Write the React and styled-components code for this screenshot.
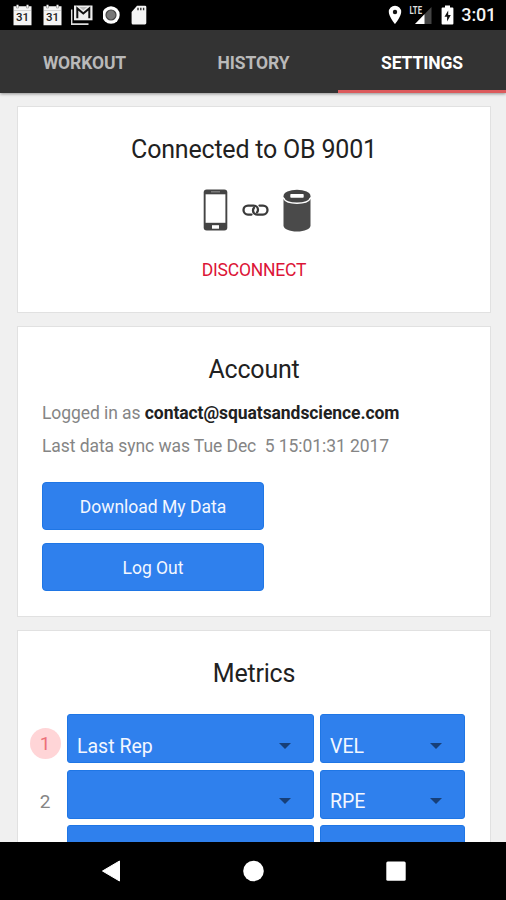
import React from 'react';
import styled, { createGlobalStyle } from 'styled-components';

const GlobalStyle = createGlobalStyle`
  * {
    box-sizing: border-box;
  }

  body {
    margin: 0;
    background: #f0f0f0;
    font-family: Roboto, 'Liberation Sans', sans-serif;
  }
`;

const Screen = styled.div`
  display: flex;
  flex-direction: column;
  width: 506px;
  height: 900px;
  overflow: hidden;
  background: #f0f0f0;
`;

const StatusBar = styled.header`
  display: flex;
  justify-content: space-between;
  flex: none;
  height: 30px;
  padding: 0 10px 0 12px;
  background: #000;
`;

const StatusGroup = styled.div`
  display: flex;
  align-items: center;
  gap: ${props => props.$gap}px;

  svg {
    display: block;
  }
`;

const Clock = styled.span`
  color: #f4f4f4;
  font-size: 18px;
  font-weight: 500;
  line-height: 32px;
  letter-spacing: -0.2px;
`;

const Tabs = styled.nav`
  display: grid;
  grid-template-columns: 169px 169px 168px;
  flex: none;
  height: 63px;
  background: #333;
  box-shadow: 0 1px 3px rgba(0, 0, 0, 0.4);
`;

const Tab = styled.a`
  height: 63px;
  padding-top: 3px;
  border-bottom: 3px solid ${props => (props.$active ? '#dc5a5c' : '#333')};
  color: ${props => (props.$active ? '#fff' : '#b9b9b9')};
  font-size: 17.5px;
  font-weight: 700;
  line-height: 60px;
  letter-spacing: -0.1px;
  text-align: center;
`;

const Content = styled.main`
  display: flex;
  flex-direction: column;
  flex: 1;
  gap: 13px;
  min-height: 0;
  padding: 13px 15px 0 17px;
  overflow: hidden;
`;

const Card = styled.section`
  flex: none;
  height: ${props => props.$height}px;
  padding: 28px 24px 0;
  border: 1px solid #e1e1e1;
  background: #fff;
`;

const Title = styled.h2`
  margin: 0;
  color: #212121;
  font-size: 25px;
  font-weight: 400;
  line-height: 30px;
  letter-spacing: -0.2px;
  text-align: center;
`;

const Devices = styled.div`
  display: flex;
  justify-content: center;
  align-items: center;
  gap: 14px;
  height: 44px;
  margin: 23px 0 27px;
  padding-left: 6px;

  svg {
    display: block;
  }
`;

const Disconnect = styled.a`
  display: block;
  color: #dc1437;
  font-size: 17.5px;
  line-height: 22px;
  letter-spacing: -0.2px;
  text-align: center;
`;

const Details = styled.div`
  margin: 12px 0 19px;
`;

const Line = styled.p`
  margin: 0;
  color: #858585;
  font-size: 17.5px;
  line-height: 33px;
  letter-spacing: -0.07px;
  white-space: pre;

  strong {
    color: #212121;
    font-weight: 700;
  }
`;

const Button = styled.button`
  display: block;
  width: 222px;
  height: 48px;
  margin: 0 0 13px;
  padding: 2px 0 0;
  border: 1px solid #1f76e5;
  border-radius: 4px;
  background: #2f80ed;
  color: #f3f7ff;
  font: 400 17.5px Roboto, sans-serif;
`;

const Metrics = styled.div`
  display: flex;
  flex-direction: column;
  gap: 6.5px;
  margin: 25px 0 0 -12.5px;
`;

const MetricRow = styled.div`
  display: grid;
  grid-template-columns: 31px 246.5px 145px;
  column-gap: 6.5px;
  height: 49px;
`;

const Rank = styled.span`
  width: 31px;
  height: 31px;
  margin-top: ${props => (props.$active ? 14 : 16)}px;
  border-radius: 50%;
  background: ${props => (props.$active ? '#ffd5d7' : 'transparent')};
  color: ${props => (props.$active ? '#ec7078' : '#858585')};
  font-size: 19px;
  line-height: 32px;
  text-align: center;
`;

const Select = styled.div`
  display: flex;
  justify-content: space-between;
  align-items: center;
  padding: 16px 22px 0 9px;
  border: 1px solid #1f76e5;
  border-radius: 3px;
  background: #2f80ed;
  color: #f3f7ff;
  font-size: 19.5px;
  line-height: 30px;
`;

const Caret = styled.span`
  margin: 0 0 2px auto;
  border: 6px solid transparent;
  border-top-color: #173f78;
  border-bottom: 0;
`;

const NavBar = styled.footer`
  display: flex;
  justify-content: space-between;
  align-items: center;
  flex: none;
  height: 58px;
  padding: 0 100px 0 101px;
  background: #000;
`;

const CalendarIcon = () => (
  <svg width="21" height="22" viewBox="0 0 21 22">
    <path d="M1.5 2.2h3V.8h2v1.4h8V.8h2v1.4h3v19h-18z" fill="#f5f5f5" />
    <path d="M2 6.5h17" stroke="#ccc" strokeWidth=".8" />
    <path d="M4.5 2v2h2V2m8 0v2h2V2" stroke="#999" fill="none" strokeWidth=".7" />
    <text x="10.5" y="17" textAnchor="middle" fontSize="11.5" fontWeight="500" fill="#222">31</text>
  </svg>
);

const MailIcon = () => (
  <svg width="23" height="22" viewBox="0 0 23 22">
    <path d="M.5 5.5v14.7h17" fill="none" stroke="#ddd" strokeWidth="1.8" />
    <path d="M3 1.5h18.5v14.8H3z" fill="#eee" />
    <path d="M6.3 14.3V4.5l6 5 6-5v9.8" fill="none" stroke="#111" strokeWidth="2" />
    <path d="M8.3 3h8l-4 3.2z" fill="#bbb" />
  </svg>
);

const RecordIcon = () => (
  <svg width="18" height="20" viewBox="0 0 18 20">
    <circle cx="8" cy="10" r="8.7" fill="#fff" />
    <circle cx="8" cy="10" r="5" fill="#777" stroke="#444" strokeWidth="1.2" />
  </svg>
);

const SdCardIcon = () => (
  <svg width="18" height="20" viewBox="-2 0 18 20">
    <path d="M6 .8h8q1.3 0 1.3 1.3v16q0 1.4-1.4 1.4H2Q.6 19.5.6 18V7z" fill="#f5f5f5" />
    <path d="M7 2.8v2.5m2.8-2.5v2.5m2.800-2.500v2.500" stroke="#333" strokeWidth="1.4" />
  </svg>
);

const PinIcon = () => (
  <svg width="14" height="20" viewBox="0 0 14 20">
    <path d="M7 .8A6.2 6.2 0 0 0 .8 7C.8 11.5 7 19 7 19s6.2-7.5 6.2-12A6.2 6.2 0 0 0 7 .8z" fill="#fff" />
    <circle cx="7" cy="7" r="2.2" fill="#111" />
  </svg>
);

const SignalIcon = () => (
  <svg width="24" height="22" viewBox="0 0 24 22">
    <path d="M22.5 3v17H6z" fill="#444" />
    <path d="M15.5 10.2V20H6z" fill="#fff" />
    <text x=".5" y="10" fontSize="10.5" fontWeight="700" textLength="12.5" lengthAdjust="spacingAndGlyphs" fill="#ddd">LTE</text>
  </svg>
);

const BatteryIcon = () => (
  <svg width="13" height="20" viewBox="0 0 13 20">
    <path d="M4 .5h5v2h2.5q.9 0 .9.9v15.100q0 .9-.9.9h-10q-.9 0-.9-.9V3.400q0-.9.9-.9H4z" fill="#fff" />
    <path d="M7.2 5.500 3.500 11.800h2.600v4.700l3.700-6.400H7.200z" fill="#111" />
  </svg>
);

const PhoneIcon = () => (
  <svg width="25" height="42" viewBox="0 0 25 42">
    <rect x=".7" y=".5" width="23.6" height="41" rx="3" fill="#444" />
    <path d="M2.6 5.3h19.8v28.5H2.6z" fill="#fff" />
    <path d="M8 2.8h9" stroke="#888" strokeWidth="1.2" />
    <rect x="9" y="36.2" width="7" height="3.5" fill="#fff" />
  </svg>
);

const LinkIcon = () => (
  <svg width="27" height="14" viewBox="0 0 27 14" fill="none" stroke="#3a3a3a" strokeWidth="2.3" strokeLinecap="round">
    <path d="M9.5 11.6H6a4.5 4.5 0 0 1 0-9h5.5c2.6 0 4.5 1.7 4.5 4.2 0 1-.4 1.9-1 2.6" />
    <path d="M17.5 2.6H21a4.5 4.5 0 0 1 0 9h-5.5c-2.6 0-4.5-1.7-4.5-4.2 0-1 .4-1.9 1-2.6" />
  </svg>
);

const SensorIcon = () => (
  <svg width="28" height="43" viewBox="0 0 28 43">
    <path d="M.5 10v26.5c0 3.500 6 6 13.500 6s13.500-2.500 13.500-6V10z" fill="#4a4a4a" />
    <ellipse cx="14" cy="7.2" rx="13.5" ry="6.5" fill="#444" />
    <path d="M.3 8.7c1.5 4 7 5.6 13.700 5.6s12.200-1.600 13.700-5.600" fill="none" stroke="#fff" strokeWidth="1.5" />
    <rect x="7.3" y="5" width="13.4" height="3.8" rx=".8" fill="#fff" />
  </svg>
);

const metrics = [
  { id: 'first', rank: 1, name: 'Last Rep', unit: 'VEL', active: true },
  { id: 'second', rank: 2, name: '', unit: 'RPE' },
  { id: 'third', name: '', unit: '' },
];

function Metric({ rank, name, unit, active }) {
  return (
    <MetricRow>
      <Rank $active={active}>{rank}</Rank>
      <Select>{name}<Caret /></Select>
      <Select>{unit}<Caret /></Select>
    </MetricRow>
  );
}

function App() {
  return (
    <Screen>
      <GlobalStyle />
      <StatusBar>
        <StatusGroup $gap={8.5}>
          <CalendarIcon />
          <CalendarIcon />
          <MailIcon />
          <RecordIcon />
          <SdCardIcon />
        </StatusGroup>
        <StatusGroup $gap={7.5}>
          <PinIcon />
          <SignalIcon />
          <BatteryIcon />
          <Clock>3:01</Clock>
        </StatusGroup>
      </StatusBar>
      <Tabs>
        <Tab>WORKOUT</Tab>
        <Tab>HISTORY</Tab>
        <Tab $active>SETTINGS</Tab>
      </Tabs>
      <Content>
        <Card $height={207}>
          <Title>Connected to OB 9001</Title>
          <Devices>
            <PhoneIcon />
            <LinkIcon />
            <SensorIcon />
          </Devices>
          <Disconnect>DISCONNECT</Disconnect>
        </Card>
        <Card $height={291}>
          <Title>Account</Title>
          <Details>
            <Line>Logged in as <strong>contact@squatsandscience.com</strong></Line>
            <Line>Last data sync was Tue Dec  5 15:01:31 2017</Line>
          </Details>
          <Button>Download My Data</Button>
          <Button>Log Out</Button>
        </Card>
        <Card $height={300}>
          <Title>Metrics</Title>
          <Metrics>
            {metrics.map(metric => <Metric key={metric.id} {...metric} />)}
          </Metrics>
        </Card>
      </Content>
      <NavBar>
        <svg width="20" height="22" viewBox="0 0 20 22">
          <path d="M18.5 1v20L1.5 11z" fill="#fff" stroke="#fff" strokeLinejoin="round" />
        </svg>
        <svg width="22" height="22" viewBox="0 0 22 22">
          <circle cx="10.5" cy="11" r="10.3" fill="#fff" />
        </svg>
        <svg width="20" height="20" viewBox="0 0 20 20">
          <rect x=".3" y=".5" width="19.4" height="19.2" rx="1.5" fill="#fff" />
        </svg>
      </NavBar>
    </Screen>
  );
}

export default App;
